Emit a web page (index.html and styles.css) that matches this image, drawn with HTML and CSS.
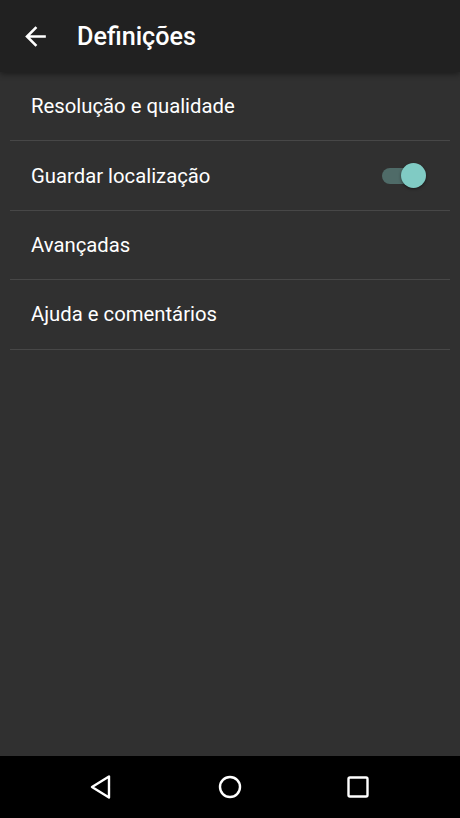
FILE: index.html
```html
<!DOCTYPE html>
<html lang="pt">
<head>
<meta charset="utf-8">
<title>Definições</title>
<link rel="stylesheet" href="styles.css">
</head>
<body>
<div class="screen">
  <header class="appbar">
    <button class="back" aria-label="Voltar">
      <svg width="31" height="31" viewBox="0 0 24 24"><path fill="#fff" d="M20 11H7.83l5.59-5.59L12 4l-8 8 8 8 1.41-1.41L7.83 13H20v-2z"/></svg>
    </button>
    <h1 class="title">Definições</h1>
  </header>
  <main class="content">
    <ul class="list">
      <li class="item"><span class="label">Resolução e qualidade</span></li>
      <li class="item"><span class="label">Guardar localização</span>
        <span class="switch on"><span class="track"></span><span class="thumb"></span></span>
      </li>
      <li class="item"><span class="label">Avançadas</span></li>
      <li class="item"><span class="label">Ajuda e comentários</span></li>
    </ul>
  </main>
  <nav class="navbar">
    <svg class="nav-icon" width="30" height="30" viewBox="0 0 30 30"><path d="M22 4.5 L22 25.5 L5 15 Z" fill="none" stroke="#fff" stroke-width="2.4" stroke-linejoin="round"/></svg>
    <svg class="nav-icon" width="30" height="30" viewBox="0 0 30 30"><circle cx="15" cy="15" r="10" fill="none" stroke="#fff" stroke-width="2.4"/></svg>
    <svg class="nav-icon" width="30" height="30" viewBox="0 0 30 30"><rect x="5.5" y="5.5" width="19" height="19" rx="1.5" fill="none" stroke="#fff" stroke-width="2.4"/></svg>
  </nav>
</div>
</body>
</html>
```

FILE: styles.css
```css
html, body {
  margin: 0;
  padding: 0;
  background: #303030;
}
body {
  font-family: Roboto, "Noto Sans", sans-serif;
  color: #fff;
}
.screen {
  width: 460px;
  height: 818px;
  display: flex;
  flex-direction: column;
  overflow: hidden;
}
.appbar {
  height: 72px;
  flex: none;
  background: #212121;
  display: flex;
  align-items: center;
  position: relative;
  z-index: 1;
  box-shadow: 0 2px 6px rgba(0,0,0,0.45);
}
.back {
  background: none;
  border: 0;
  padding: 0;
  margin: 0 0 0 20px;
  width: 31px;
  height: 31px;
  display: flex;
}
.title {
  margin: 0 0 0 26px;
  font-size: 25.2px;
  font-weight: 500;
  letter-spacing: 0;
  color: #fff;
}
.content {
  flex: 1;
  background: #303030;
}
.list {
  list-style: none;
  margin: 0;
  padding: 0 10px;
}
.item {
  height: 68.4px;
  border-bottom: 1px solid #474747;
  display: flex;
  align-items: center;
  justify-content: space-between;
  padding: 0 24px 0 21px;
}
.label {
  font-size: 20.3px;
  color: #fff;
}
.switch {
  position: relative;
  width: 44px;
  height: 26px;
  display: block;
}
.track {
  position: absolute;
  left: 0;
  top: 5px;
  width: 34px;
  height: 16px;
  border-radius: 8px;
  background: #4f6b68;
}
.thumb {
  position: absolute;
  right: 0;
  top: 0;
  width: 25px;
  height: 25px;
  border-radius: 50%;
  background: #80cbc4;
  box-shadow: 0 1px 3px rgba(0,0,0,0.5);
}
.navbar {
  height: 62px;
  flex: none;
  background: #000;
  display: flex;
  align-items: center;
  justify-content: center;
  gap: 98px;
}
.nav-icon {
  display: block;
}
```
